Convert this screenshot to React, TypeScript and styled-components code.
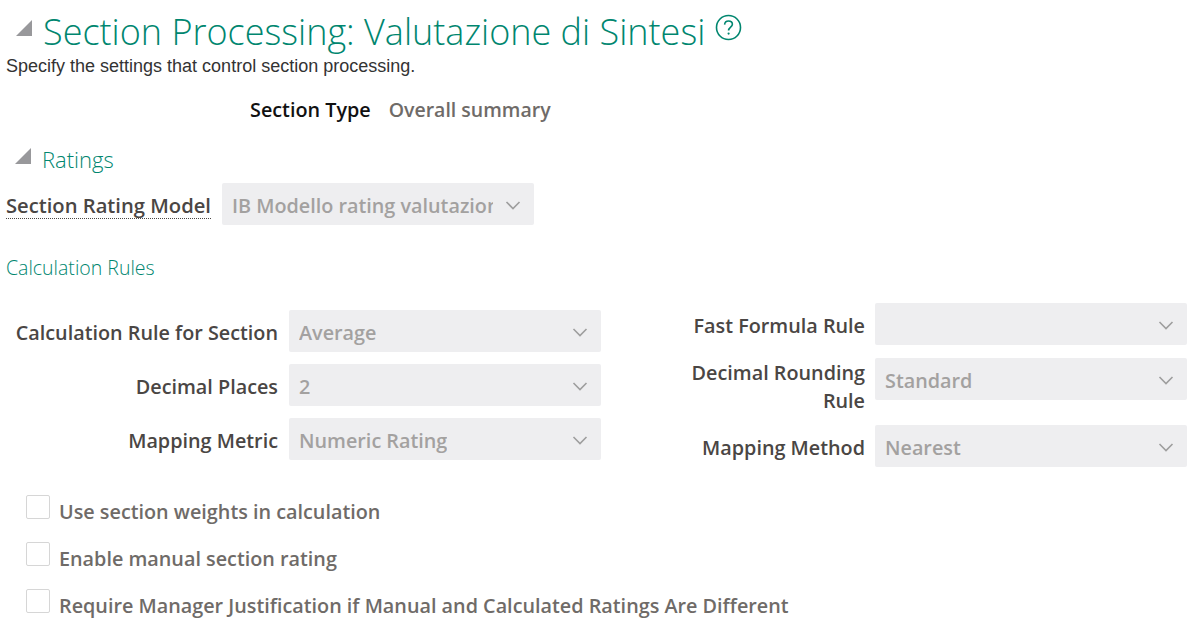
import React from "react";
import styled, { createGlobalStyle } from "styled-components";

const GlobalStyle = createGlobalStyle`
  html, body { margin: 0; padding: 0; background: #fff; overflow: hidden; }
  body { font-family: "Open Sans", "Liberation Sans", sans-serif; }
`;

const Page = styled.div`
  width: 1204px;
  height: 619px;
  padding: 7px 0 0 6px;
  box-sizing: border-box;
  display: flex;
  flex-direction: column;
  overflow: hidden;
`;

const HeaderRow = styled.div`
  display: flex;
  align-items: center;
  height: 49px;
`;

const Disclosure = styled.span<{ $left: number; $gap: number; $lift: number }>`
  width: 0;
  height: 0;
  margin-left: ${(p) => p.$left}px;
  margin-right: ${(p) => p.$gap}px;
  margin-top: -${(p) => p.$lift}px;
  border-style: solid;
  border-width: 0 0 16px 16px;
  border-color: transparent transparent #98989b transparent;
`;

const Title = styled.h1`
  margin: 0;
  font-size: 36px;
  font-weight: 300;
  line-height: 50px;
  color: #00866f;
  white-space: nowrap;
`;

const HelpIcon = styled.svg`
  width: 27px;
  height: 27px;
  margin-left: 10px;
  margin-top: -8px;
`;

const Description = styled.p`
  margin: 0;
  font-family: "Liberation Sans", Arial, sans-serif;
  font-size: 18px;
  line-height: 20px;
  color: #333;
`;

const SectionTypeRow = styled.div`
  display: flex;
  align-items: center;
  gap: 18px;
  margin-top: 20px;
  height: 28px;
  padding-left: 244px;
  font-size: 19.8px;
  font-weight: 600;
`;

const StrongLabel = styled.span`
  color: #111;
`;

const ReadOnlyValue = styled.span`
  font-size: 19.5px;
  color: #6f6b68;
`;

const SubHeaderRow = styled.div`
  display: flex;
  align-items: center;
  height: 30px;
  margin-top: 21px;
`;

const SubTitle = styled.h2`
  margin: 0;
  font-size: 22px;
  font-weight: 300;
  color: #00866f;
  line-height: 30px;
`;

const ModelRow = styled.div`
  display: flex;
  align-items: center;
  gap: 11px;
  margin-top: 9px;
`;

const DottedLabel = styled.span`
  font-size: 20.2px;
  font-weight: 600;
  line-height: 25px;
  margin-top: 4px;
  color: #4a4644;
  border-bottom: 1px dotted #4a4644;
  white-space: nowrap;
`;

const SelectBox = styled.div<{ $width: number }>`
  width: ${(p) => p.$width}px;
  height: 42px;
  box-sizing: border-box;
  flex: none;
  display: flex;
  align-items: center;
  justify-content: space-between;
  padding: 0 13px 0 10px;
  border-radius: 2px;
  background: #eeeef0;
  font-size: 19.8px;
  font-weight: 600;
  color: #a3a1a0;
`;

const SelectText = styled.span<{ $clip?: number }>`
  white-space: nowrap;
  overflow: hidden;
  padding-top: 2px;
  ${(p) => (p.$clip ? `width: ${p.$clip}px;` : "")}
`;

const ChevronIcon = styled.svg`
  flex: none;
  margin-top: 2px;
`;

const GroupTitle = styled.h3`
  margin: 30px 0 0;
  font-size: 19.5px;
  font-weight: 300;
  line-height: 26px;
  color: #00866f;
`;

const RulesGrid = styled.div`
  display: flex;
  margin-top: 22px;
`;

const RuleColumn = styled.div<{ $width: number; $top: number }>`
  width: ${(p) => p.$width}px;
  padding-top: ${(p) => p.$top}px;
  display: flex;
  flex-direction: column;
  gap: 12px;
`;

const RuleRow = styled.div<{ $labelWidth: number; $labelGap: number }>`
  display: grid;
  grid-template-columns: ${(p) => p.$labelWidth}px auto;
  column-gap: ${(p) => p.$labelGap}px;
  align-items: center;
`;

const RuleLabel = styled.label`
  font-size: 19.8px;
  font-weight: 600;
  line-height: 28px;
  padding-top: 4px;
  color: #4a4644;
  text-align: right;
`;

const TallRow = styled(RuleRow)`
  align-items: start;
  height: 55px;
  margin-top: 1px;

  ${RuleLabel} {
    padding-top: 1px;
  }
`;

const CheckList = styled.div`
  display: flex;
  flex-direction: column;
  gap: 19px;
  margin-top: 30px;
  padding-left: 20px;
`;

const CheckRow = styled.div`
  display: flex;
  align-items: center;
  gap: 9px;
  height: 28px;
`;

const CheckBox = styled.span`
  width: 24px;
  height: 24px;
  box-sizing: border-box;
  margin-top: -8px;
  border: 1px solid #d6d6d6;
  border-radius: 2px;
  background: #fff;
  flex: none;
`;

const CheckLabel = styled.span`
  font-size: 19.8px;
  font-weight: 600;
  color: #6f6b68;
  white-space: nowrap;
`;

const Chevron = () => (
  <ChevronIcon width="16" height="16" viewBox="0 0 16 16" fill="none">
    <path d="M1.5 5 L8 11.5 L14.5 5" stroke="#9e9e9e" strokeWidth="1.6" />
  </ChevronIcon>
);

const Select = ({ width, value, clip }: { width: number; value?: string; clip?: number }) => (
  <SelectBox $width={width}>
    <SelectText $clip={clip}>{value}</SelectText>
    <Chevron />
  </SelectBox>
);

const leftRules = [
  { label: "Calculation Rule for Section", value: "Average" },
  { label: "Decimal Places", value: "2" },
  { label: "Mapping Metric", value: "Numeric Rating" },
];

const checks = [
  "Use section weights in calculation",
  "Enable manual section rating",
  "Require Manager Justification if Manual and Calculated Ratings Are Different",
];

export default function App() {
  return (
    <Page>
      <GlobalStyle />
      <HeaderRow>
        <Disclosure $left={10} $gap={11} $lift={8} />
        <Title>Section Processing: Valutazione di Sintesi</Title>
        <HelpIcon viewBox="0 0 27 27" fill="none">
          <circle cx="13.5" cy="13.5" r="12" stroke="#00866f" strokeWidth="1.6" />
          <path d="M9.6 10.6 C9.8 8.2 11.4 7 13.5 7 C15.8 7 17.4 8.4 17.4 10.3 C17.4 13 13.6 13.4 13.6 16.6" stroke="#00866f" strokeWidth="1.6" />
          <circle cx="13.6" cy="19.6" r="1.1" fill="#00866f" />
        </HelpIcon>
      </HeaderRow>
      <Description>Specify the settings that control section processing.</Description>
      <SectionTypeRow>
        <StrongLabel>Section Type</StrongLabel>
        <ReadOnlyValue>Overall summary</ReadOnlyValue>
      </SectionTypeRow>
      <SubHeaderRow>
        <Disclosure $left={9} $gap={11} $lift={6} />
        <SubTitle>Ratings</SubTitle>
      </SubHeaderRow>
      <ModelRow>
        <DottedLabel>Section Rating Model</DottedLabel>
        <Select width={312} value="IB Modello rating valutazione" clip={261} />
      </ModelRow>
      <GroupTitle>Calculation Rules</GroupTitle>
      <RulesGrid>
        <RuleColumn $width={669} $top={7}>
          {leftRules.map((r) => (
            <RuleRow key={r.label} $labelWidth={272} $labelGap={11}>
              <RuleLabel>{r.label}</RuleLabel>
              <Select width={312} value={r.value} />
            </RuleRow>
          ))}
        </RuleColumn>
        <RuleColumn $width={520} $top={0}>
          <RuleRow $labelWidth={190} $labelGap={10}>
            <RuleLabel>Fast Formula Rule</RuleLabel>
            <Select width={312} />
          </RuleRow>
          <TallRow $labelWidth={190} $labelGap={10}>
            <RuleLabel>
              Decimal Rounding
              <br />
              Rule
            </RuleLabel>
            <Select width={312} value="Standard" />
          </TallRow>
          <RuleRow $labelWidth={190} $labelGap={10}>
            <RuleLabel>Mapping Method</RuleLabel>
            <Select width={312} value="Nearest" />
          </RuleRow>
        </RuleColumn>
      </RulesGrid>
      <CheckList>
        {checks.map((c) => (
          <CheckRow key={c}>
            <CheckBox />
            <CheckLabel>{c}</CheckLabel>
          </CheckRow>
        ))}
      </CheckList>
    </Page>
  );
}
